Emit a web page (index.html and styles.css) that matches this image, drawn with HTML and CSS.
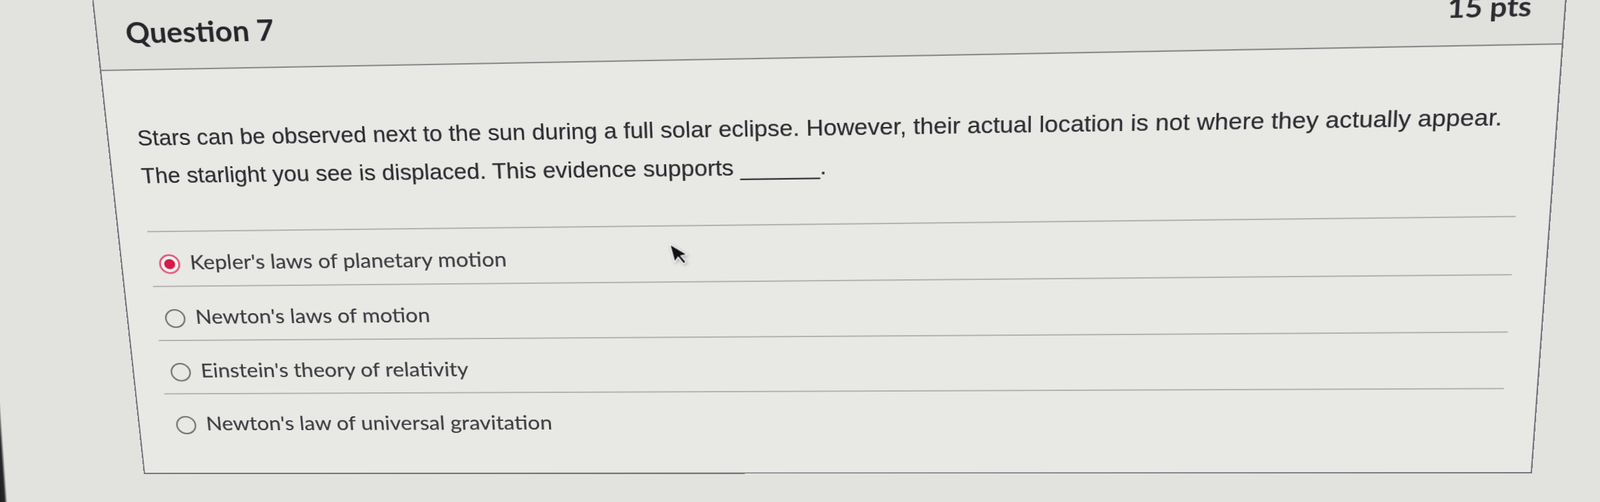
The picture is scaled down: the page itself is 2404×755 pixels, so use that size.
FILE: index.html
```html
<!DOCTYPE html>
<html lang="en">
<head>
<meta charset="utf-8">
<title>Question 7</title>
<link rel="stylesheet" href="styles.css">
</head>
<body>
<div class="card">
  <div class="card-header">
    <h2 class="q-title">Question 7</h2>
    <span class="q-points">15 pts</span>
  </div>
  <div class="card-body">
    <p class="q-text">Stars can be observed next to the sun during a full solar eclipse. However, their actual location is not where they actually appear. The starlight you see is displaced. This evidence supports <span class="blank">______</span>.</p>
    <ul class="answers">
      <li class="answer">
        <svg class="radio" viewBox="0 0 30 30"><circle cx="15" cy="15" r="13.4" fill="#f3f1f1" stroke="#e2587b" stroke-width="2.6"/><circle cx="15" cy="15" r="7.6" fill="#d51b49"/></svg>
        <span class="label">Kepler's laws of planetary motion</span>
      </li>
      <li class="answer">
        <svg class="radio" viewBox="0 0 30 30"><circle cx="15" cy="15" r="13.2" fill="none" stroke="#737377" stroke-width="2.2"/></svg>
        <span class="label">Newton's laws of motion</span>
      </li>
      <li class="answer">
        <svg class="radio" viewBox="0 0 30 30"><circle cx="15" cy="15" r="13.2" fill="none" stroke="#737377" stroke-width="2.2"/></svg>
        <span class="label">Einstein's theory of relativity</span>
      </li>
      <li class="answer">
        <svg class="radio" viewBox="0 0 30 30"><circle cx="15" cy="15" r="13.2" fill="none" stroke="#737377" stroke-width="2.2"/></svg>
        <span class="label">Newton's law of universal gravitation</span>
      </li>
    </ul>
  </div>
  <svg class="cursor" viewBox="0 0 20 32"><path d="M1.5 1.5 L1.5 25 L7 19.5 L11 29 L14.5 27.5 L10.5 18.5 L18 18.5 Z" fill="#111114" stroke="#f4f4f4" stroke-width="1.4" stroke-linejoin="round"/></svg>
</div>
</body>
</html>
```

FILE: styles.css
```css
html, body {
  margin: 0;
  height: 100%;
  overflow: hidden;
}

body {
  background-color: #e2e2df;
  background-image: linear-gradient(86deg, #1d1d20 0, #2a2a2d 7px, rgba(0, 0, 0, 0) 11px);
  background-repeat: no-repeat;
  background-size: 16px 170px;
  background-position: left bottom;
  font-family: "Liberation Sans", Arial, sans-serif;
}

.card {
  position: relative;
  width: 1950px;
  box-sizing: border-box;
  border: 2px solid #75757f;
  background: #e8e8e5;
  transform-origin: 0 0;
  transform: matrix3d(1.054954, -0.022556, 0, -0.000030966, 0.123260, 1.024842, 0, 0.000084092, 0, 0, 1, 0, 133.976, -27.229, 0, 0.989068);
}

.card-header {
  box-sizing: border-box;
  height: 129px;
  padding: 48px 41px 0 40px;
  display: flex;
  justify-content: space-between;
  align-items: baseline;
  background: #e0e0dc;
  border-bottom: 2px solid #88888b;
}

.q-title {
  margin: 0;
  font: 700 42px/1.2 Lato, "Liberation Sans", sans-serif;
  color: #26262c;
}

.q-points {
  font: 700 38px/1.2 Lato, "Liberation Sans", sans-serif;
  color: #2c2c32;
}

.card-body {
  padding: 73px 43px 44px 41px;
}

.q-text {
  margin: 0 0 55px;
  font-size: 32.3px;
  line-height: 57px;
  color: #2b2b31;
  text-shadow: 0 0 0.5px rgba(40, 40, 46, 0.6);
}

.answers {
  list-style: none;
  margin: 0;
  padding: 0;
}

.answer {
  display: flex;
  align-items: flex-start;
  height: 57px;
  padding: 26px 0 0 11px;
  border-top: 2px solid #b1b1b1;
}

.radio {
  flex: none;
  width: 31px;
  height: 31px;
  margin: 8px 14px 0 1px;
}

.label {
  font: 400 31px/40px Lato, "Liberation Sans", sans-serif;
  color: #3b3b40;
  text-shadow: 0 0 0.4px rgba(50, 50, 56, 0.5);
}

.cursor {
  position: absolute;
  left: 775px;
  top: 398px;
  width: 24px;
  height: 38px;
  transform: rotate(-12deg);
  transform-origin: 2px 2px;
  filter: drop-shadow(1px 2px 2px rgba(0, 0, 0, 0.25));
}
```
